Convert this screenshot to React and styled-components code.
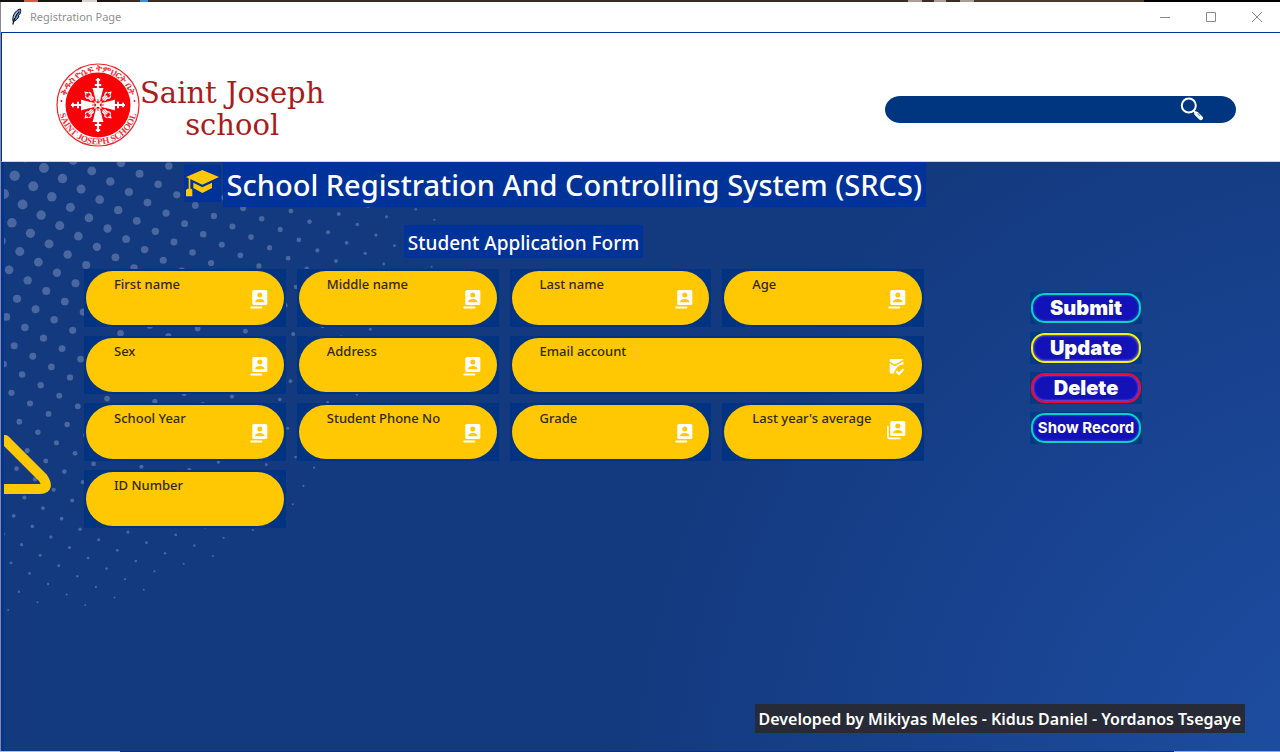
import React from "react";
import styled, { createGlobalStyle } from "styled-components";

const GlobalStyle = createGlobalStyle`
  *, *::before, *::after { box-sizing: border-box; }
  body { margin: 0; background: #13397e; font-family: "Noto Sans", "Open Sans", sans-serif; }
  button, input { font: inherit; }
`;

const Desktop = styled.div`
  display: flex;
  flex-direction: column;
  min-height: 100vh;
`;

const DesktopStrip = styled.div`
  flex: none;
  height: 2px;
  background: linear-gradient(
    90deg,
    #14100e 0 24px, #d8574a 24px 38px, #1c1613 38px 82px, #d9d4d0 82px 97px,
    #1c1613 97px 120px, #3b2d24 120px 140px, #3f8fd6 140px 148px, #3b2d24 148px 908px,
    #a89e96 908px 922px, #3b2d24 922px 934px, #a89e96 934px 946px, #3b2d24 946px 960px,
    #a89e96 960px 974px, #4a3a2c 974px 1144px, #000 1144px
  );
`;

const TaskbarEdge = styled.div`
  flex: none;
  height: 1px;
  background: linear-gradient(90deg, #b9bdc6 0 120px, #2c2c34 120px calc(100% - 106px), #9fa9c4 calc(100% - 106px));
`;

const Window = styled.div`
  flex: 1;
  display: flex;
  flex-direction: column;
  border-left: 1px solid #8b8b8f;
`;

const TitleBar = styled.div`
  display: flex;
  align-items: center;
  height: 31px;
  padding-left: 9px;
  background: #fff;
  border-bottom: 1px solid #003399;
`;

const WindowTitle = styled.span`
  flex: 1;
  padding-left: 8px;
  font-size: 11px;
  line-height: 16px;
  color: #8f8f8f;
`;

const WindowButton = styled.button`
  display: grid;
  place-items: center;
  width: 46px;
  height: 28px;
  padding: 0;
  border: 0;
  background: none;
`;

const Header = styled.header`
  display: flex;
  align-items: center;
  justify-content: space-between;
  height: 129px;
  padding: 16px 44px 0 54px;
  background: #fff;
  border-left: 1px solid #003399;
  border-bottom: 1px solid #c9d6ea;
`;

const Brand = styled.div`
  display: flex;
  align-items: center;
`;

const BrandName = styled.div`
  padding-top: 8px;
  font-family: "DejaVu Serif", serif;
  font-size: 29px;
  line-height: 32px;
  text-align: center;
  color: #a81c1c;
`;

const SearchBox = styled.form`
  display: flex;
  align-items: center;
  width: 351px;
  height: 27px;
  margin-top: 8px;
  padding: 0 32px 0 16px;
  border-radius: 16px / 14px;
  background: #003580;
`;

const SearchInput = styled.input`
  flex: 1;
  min-width: 0;
  height: 24px;
  padding: 0;
  border: 0;
  outline: 0;
  background: none;
  color: #fff;
  font-size: 14px;
`;

const IconButton = styled.button`
  display: flex;
  padding: 0;
  border: 0;
  background: none;
`;

const Main = styled.main`
  position: relative;
  flex: 1;
  display: flex;
  flex-direction: column;
  border-left: 3px solid #003399;
  background: radial-gradient(circle 800px at calc(100% + 120px) calc(100% + 49px), #1f4fa6, #13397e);
`;

const Backdrop = styled.svg`
  position: absolute;
  inset: 0;
  width: 100%;
  height: 100%;
`;

const Content = styled.div`
  position: relative;
  display: flex;
  align-items: flex-start;
  padding: 0 138px 0 80px;
`;

const FormArea = styled.form`
  flex: 1;
  min-width: 0;
  display: flex;
  flex-direction: column;
`;

const TitleRow = styled.div`
  display: flex;
  align-items: flex-start;
  justify-content: flex-end;
  gap: 2px;
`;

const CapTile = styled.span`
  display: flex;
  margin-top: 3px;
  background: #003399;
`;

const PageTitle = styled.h1`
  margin: 0 -2px 0 0;
  padding: 0 4px;
  background: #003399;
  color: #fff;
  font-size: 29px;
  font-weight: 500;
  line-height: 45px;
  white-space: nowrap;
`;

const SubTitle = styled.h2`
  align-self: center;
  margin: 18px 0 11px 39px;
  padding: 4px 4px 0;
  background: #003399;
  color: #fff;
  font-size: 19px;
  font-weight: 500;
  line-height: 29px;
  white-space: nowrap;
`;

const Fields = styled.div`
  display: grid;
  grid-template-columns: repeat(4, minmax(0, 1fr));
  gap: 9px 11px;
`;

const FieldCell = styled.div`
  grid-column: span ${(p) => p.$span};
  padding: 2px;
  background: #003482;
`;

const Pill = styled.div`
  display: flex;
  align-items: center;
  height: 54px;
  padding: 0 14px 0 28px;
  border-radius: 27px;
  background: #ffc803;
`;

const FieldBody = styled.div`
  flex: 1;
  min-width: 0;
  height: 54px;
  padding-top: 4px;
  display: flex;
  flex-direction: column;
`;

const FieldLabel = styled.label`
  font-size: 13px;
  font-weight: 500;
  line-height: 18px;
  color: #33290a;
  white-space: nowrap;
`;

const FieldInput = styled.input`
  width: 100%;
  height: 24px;
  padding: 0;
  border: 0;
  outline: 0;
  background: none;
  font-size: 13px;
  color: #33290a;
`;

const Actions = styled.div`
  display: flex;
  flex-direction: column;
  gap: 8px;
  margin: 130px 0 0 106px;
`;

const ActionCell = styled.div`
  padding: 1px;
  background: #003a85;
`;

const ActionButton = styled.button`
  display: block;
  width: 110px;
  height: 30px;
  padding: 0;
  border: 2px solid ${(p) => p.$ring};
  border-radius: 14px;
  background: #1212b8;
  box-shadow: inset 0 0 2px 1px ${(p) => p.$glow};
  color: #fff;
  font-family: Inter, sans-serif;
  font-size: ${(p) => (p.$compact ? 15 : 20)}px;
  font-weight: ${(p) => (p.$compact ? 700 : 900)};
  line-height: 24px;
  white-space: nowrap;
`;

const Credits = styled.footer`
  position: relative;
  align-self: flex-end;
  margin: auto 35px 18px 0;
  padding: 1px 4px 0;
  background: #272b38;
  color: #fff;
  font-size: 16px;
  font-weight: 600;
  line-height: 28px;
  white-space: nowrap;
`;

const fields = [
  { id: "first", label: "First name", icon: "person" },
  { id: "middle", label: "Middle name", icon: "person" },
  { id: "last", label: "Last name", icon: "person" },
  { id: "age", label: "Age", icon: "person" },
  { id: "sex", label: "Sex", icon: "person" },
  { id: "address", label: "Address", icon: "person" },
  { id: "email", label: "Email account", icon: "mail", span: 2 },
  { id: "year", label: "School Year", icon: "person" },
  { id: "phone", label: "Student Phone No", icon: "person" },
  { id: "grade", label: "Grade", icon: "person" },
  { id: "average", label: "Last year's average", icon: "stack" },
  { id: "number", label: "ID Number" },
];

const actions = [
  { label: "Submit", ring: "#06d3c3", glow: "#2a35c4" },
  { label: "Update", ring: "#f6f300", glow: "#6a62d8" },
  { label: "Delete", ring: "#f8062c", glow: "#7a50dc" },
  { label: "Show Record", ring: "#06d3c3", glow: "#2a35c4", compact: true },
];

// Halftone lattice whose dots shrink with distance from the top-left corner.
function makeDots() {
  const dots = [];
  for (let i = -20; i < 40; i++) {
    for (let j = -22; j < 22; j++) {
      const x = 10.7 + i * 18.57 + j * 29.25;
      const y = 13.7 + i * 10.56 - j * 7.7;
      const d = Math.hypot(x, y - 8);
      if (x > -6 && y > -6 && d < 444) {
        dots.push({ x, y, r: 5.3 - (4.2 * d) / 430, key: `${i}:${j}` });
      }
    }
  }
  return dots;
}

const dots = makeDots();

function Person({ y }) {
  return (
    <>
      <rect x="4.3" y={y} width="15" height="15" rx="1.6" fill="#fff" />
      <circle cx="11.8" cy={y + 5} r="2.5" fill="#ffc803" />
      <path d={`M7.2 ${y + 12.3}v-.9c0-1.6 3-2.5 4.6-2.5s4.6.9 4.6 2.5v.9z`} fill="#ffc803" />
    </>
  );
}

function FieldIcon({ kind }) {
  return (
    <svg width="22" height="24" viewBox="0 0 22 24" aria-hidden="true">
      {kind === "person" && (
        <>
          <Person y={4} />
          <path d="M3.2 21.5h10.2" stroke="#fff" strokeWidth="1.8" strokeLinecap="round" />
        </>
      )}
      {kind === "stack" && (
        <>
          <Person y={1} />
          <path d="M1.9 6.6v10.4q0 1.3 1.3 1.3h10.6" fill="none" stroke="#fff" strokeWidth="1.7" strokeLinecap="round" />
        </>
      )}
      {kind === "mail" && (
        <>
          <path d="M3.7 7.2Q3.7 6 4.9 6h11.3q1.2 0 1.2 1.2v4.6q-4.4-.8-6.6 3.2-1.4 2.9-1.8 5.6H4.9q-1.2 0-1.2-1.2z" fill="#fff" />
          <path d="M3.5 9.4l5.2 3 9-5" fill="none" stroke="#ffc803" strokeWidth="1.6" />
          <path d="M8.4 20.8q1-6 9.3-8.6" fill="none" stroke="#ffc803" strokeWidth="1.4" />
          <path d="M10.3 18.3l2.7 2.6 4.4-4.6" fill="none" stroke="#fff" strokeWidth="2.2" />
        </>
      )}
    </svg>
  );
}

function Cap() {
  return (
    <svg width="37" height="37" viewBox="0 0 111 111" fill="#ffc803" aria-hidden="true">
      <path d="M6 36L55 15l50 21-50 23z" />
      <path d="M28 53l27 14 29-14v16L55 84 28 69z" />
      <path d="M14 38h5v33h3l3 3v20H6V75l4-4h4z" />
    </svg>
  );
}

function Feather() {
  return (
    <svg width="12" height="18" viewBox="0 0 12 18" aria-hidden="true">
      <path d="M10.5 1C7 1.5 3.5 5 2.8 10.5L3 13.5c2.5-.5 5-2.5 6-5.5l-.8-.3 1.5-1.2C10.6 4.5 11 2.5 10.5 1z" fill="#5b93d8" stroke="#111" strokeWidth="1" />
      <path d="M9 3.5C6 7 4 11 2.8 16.5" fill="none" stroke="#111" strokeWidth="1.2" />
      <path d="M8 3.5C6 5.5 4.6 8 4.2 10" fill="none" stroke="#b9d7f7" strokeWidth=".9" />
    </svg>
  );
}

function Seal() {
  const arm = (
    <>
      <path d="M-2-3.5L-4.6-14l-.9-3h11L4.6-14 2-3.5z" />
      <path d="M-1.1-27h2.2v11h-2.2zM-3.2-21h6.4v2h-6.4zM-2.2-26h4.4v1.8h-4.4z" />
    </>
  );
  const petal = (
    <g fill="none" stroke="#fff" strokeWidth="1.3">
      <path d="M0-5v9M0-6.5V-13M-1.6-7.5v-4q-2.8-1.8-.6-4M1.6-7.5v-4q2.8-1.8.6-4" />
      <path d="M-1.5-15.5L0-18l1.5 2.5" />
    </g>
  );
  return (
    <svg width="84" height="84" viewBox="-42 -42 84 84" role="img" aria-label="Saint Joseph School seal">
      <defs>
        <path id="seal-top" d="M-33.5 0a33.5 33.5 0 0 1 67 0" />
        <path id="seal-bottom" d="M-39.5 0a39.5 39.5 0 0 0 79 0" />
      </defs>
      <circle r="41" fill="#fff" stroke="#f4232a" strokeWidth="1.2" />
      <circle r="32.5" fill="#fb0007" />
      <g fill="#fff">
        {[0, 90, 180, 270].map((a) => (
          <g key={a} transform={`rotate(${a})`}>{arm}</g>
        ))}
        {[45, 135, 225, 315].map((a) => (
          <g key={a} transform={`rotate(${a})`}>{petal}</g>
        ))}
      </g>
      <path d="M-6 0H6M0-6V6" stroke="#fb0007" strokeWidth=".8" />
      <circle r="2" fill="#fff" />
      <g fill="#e8333a" fontFamily="Liberation Serif, serif" fontWeight="700" textAnchor="middle">
        <text fontSize="9">
          <textPath href="#seal-top" startOffset="50%">ቅዱስ ዮሴፍ ትምህርት ቤት</textPath>
        </text>
        <text fontSize="9">
          <textPath href="#seal-bottom" startOffset="50%">SAINT JOSEPH SCHOOL</textPath>
        </text>
      </g>
      <circle cx="-36.5" cy="-4" r=".9" fill="#fb0007" />
      <circle cx="36.5" cy="-4" r=".9" fill="#fb0007" />
    </svg>
  );
}

function SearchIcon() {
  return (
    <svg width="24" height="24" viewBox="0 0 24 24" fill="none" aria-hidden="true">
      <circle cx="8.8" cy="8.5" r="7" stroke="#fff" strokeWidth="2" />
      <path d="M13.6 13.8l2.2 2.2" stroke="#fff" strokeWidth="2" />
      <path d="M16.5 16.8l4.3 4.2" stroke="#fff" strokeWidth="4.4" strokeLinecap="round" />
      <path d="M17.4 16.2l2.6 2.6" stroke="#7f9cc4" strokeWidth="1.2" />
    </svg>
  );
}

function Field({ id, label, icon, span = 1 }) {
  return (
    <FieldCell $span={span}>
      <Pill>
        <FieldBody>
          <FieldLabel htmlFor={id}>{label}</FieldLabel>
          <FieldInput id={id} type={icon === "mail" ? "email" : "text"} />
        </FieldBody>
        {icon && <FieldIcon kind={icon} />}
      </Pill>
    </FieldCell>
  );
}

export default function App() {
  return (
    <Desktop>
      <GlobalStyle />
      <DesktopStrip />
      <Window>
        <TitleBar>
          <Feather />
          <WindowTitle>Registration Page</WindowTitle>
          <WindowButton aria-label="Minimize">
            <svg width="10" height="10" viewBox="0 0 10 10"><path d="M0 5.5h10" stroke="#8a8a8a" /></svg>
          </WindowButton>
          <WindowButton aria-label="Maximize">
            <svg width="10" height="10" viewBox="0 0 10 10"><path d="M.5.5h9v9h-9z" fill="none" stroke="#8a8a8a" /></svg>
          </WindowButton>
          <WindowButton aria-label="Close">
            <svg width="10" height="10" viewBox="0 0 10 10"><path d="M0 0l10 10M10 0L0 10" stroke="#8a8a8a" /></svg>
          </WindowButton>
        </TitleBar>
        <Header>
          <Brand>
            <Seal />
            <BrandName>Saint Joseph<br />school</BrandName>
          </Brand>
          <SearchBox role="search">
            <SearchInput type="text" aria-label="Search" />
            <IconButton type="button" aria-label="Search"><SearchIcon /></IconButton>
          </SearchBox>
        </Header>
        <Main>
          <Backdrop aria-hidden="true">
            <g fill="#4a689f">
              {dots.map((d) => <circle key={d.key} cx={d.x} cy={d.y} r={d.r} />)}
            </g>
            <path d="M1 278L39 316Q46 327 36 327H-6" fill="none" stroke="#ffc803" strokeWidth="10" strokeLinecap="round" />
          </Backdrop>
          <Content>
            <FormArea id="registration">
              <TitleRow>
                <CapTile><Cap /></CapTile>
                <PageTitle>School Registration And Controlling System (SRCS)</PageTitle>
              </TitleRow>
              <SubTitle>Student Application Form</SubTitle>
              <Fields>
                {fields.map((f) => <Field key={f.id} {...f} />)}
              </Fields>
            </FormArea>
            <Actions>
              {actions.map((a) => (
                <ActionCell key={a.label}>
                  <ActionButton type="button" $ring={a.ring} $glow={a.glow} $compact={a.compact}>
                    {a.label}
                  </ActionButton>
                </ActionCell>
              ))}
            </Actions>
          </Content>
          <Credits>Developed by Mikiyas Meles - Kidus Daniel - Yordanos Tsegaye</Credits>
        </Main>
      </Window>
      <TaskbarEdge />
    </Desktop>
  );
}
